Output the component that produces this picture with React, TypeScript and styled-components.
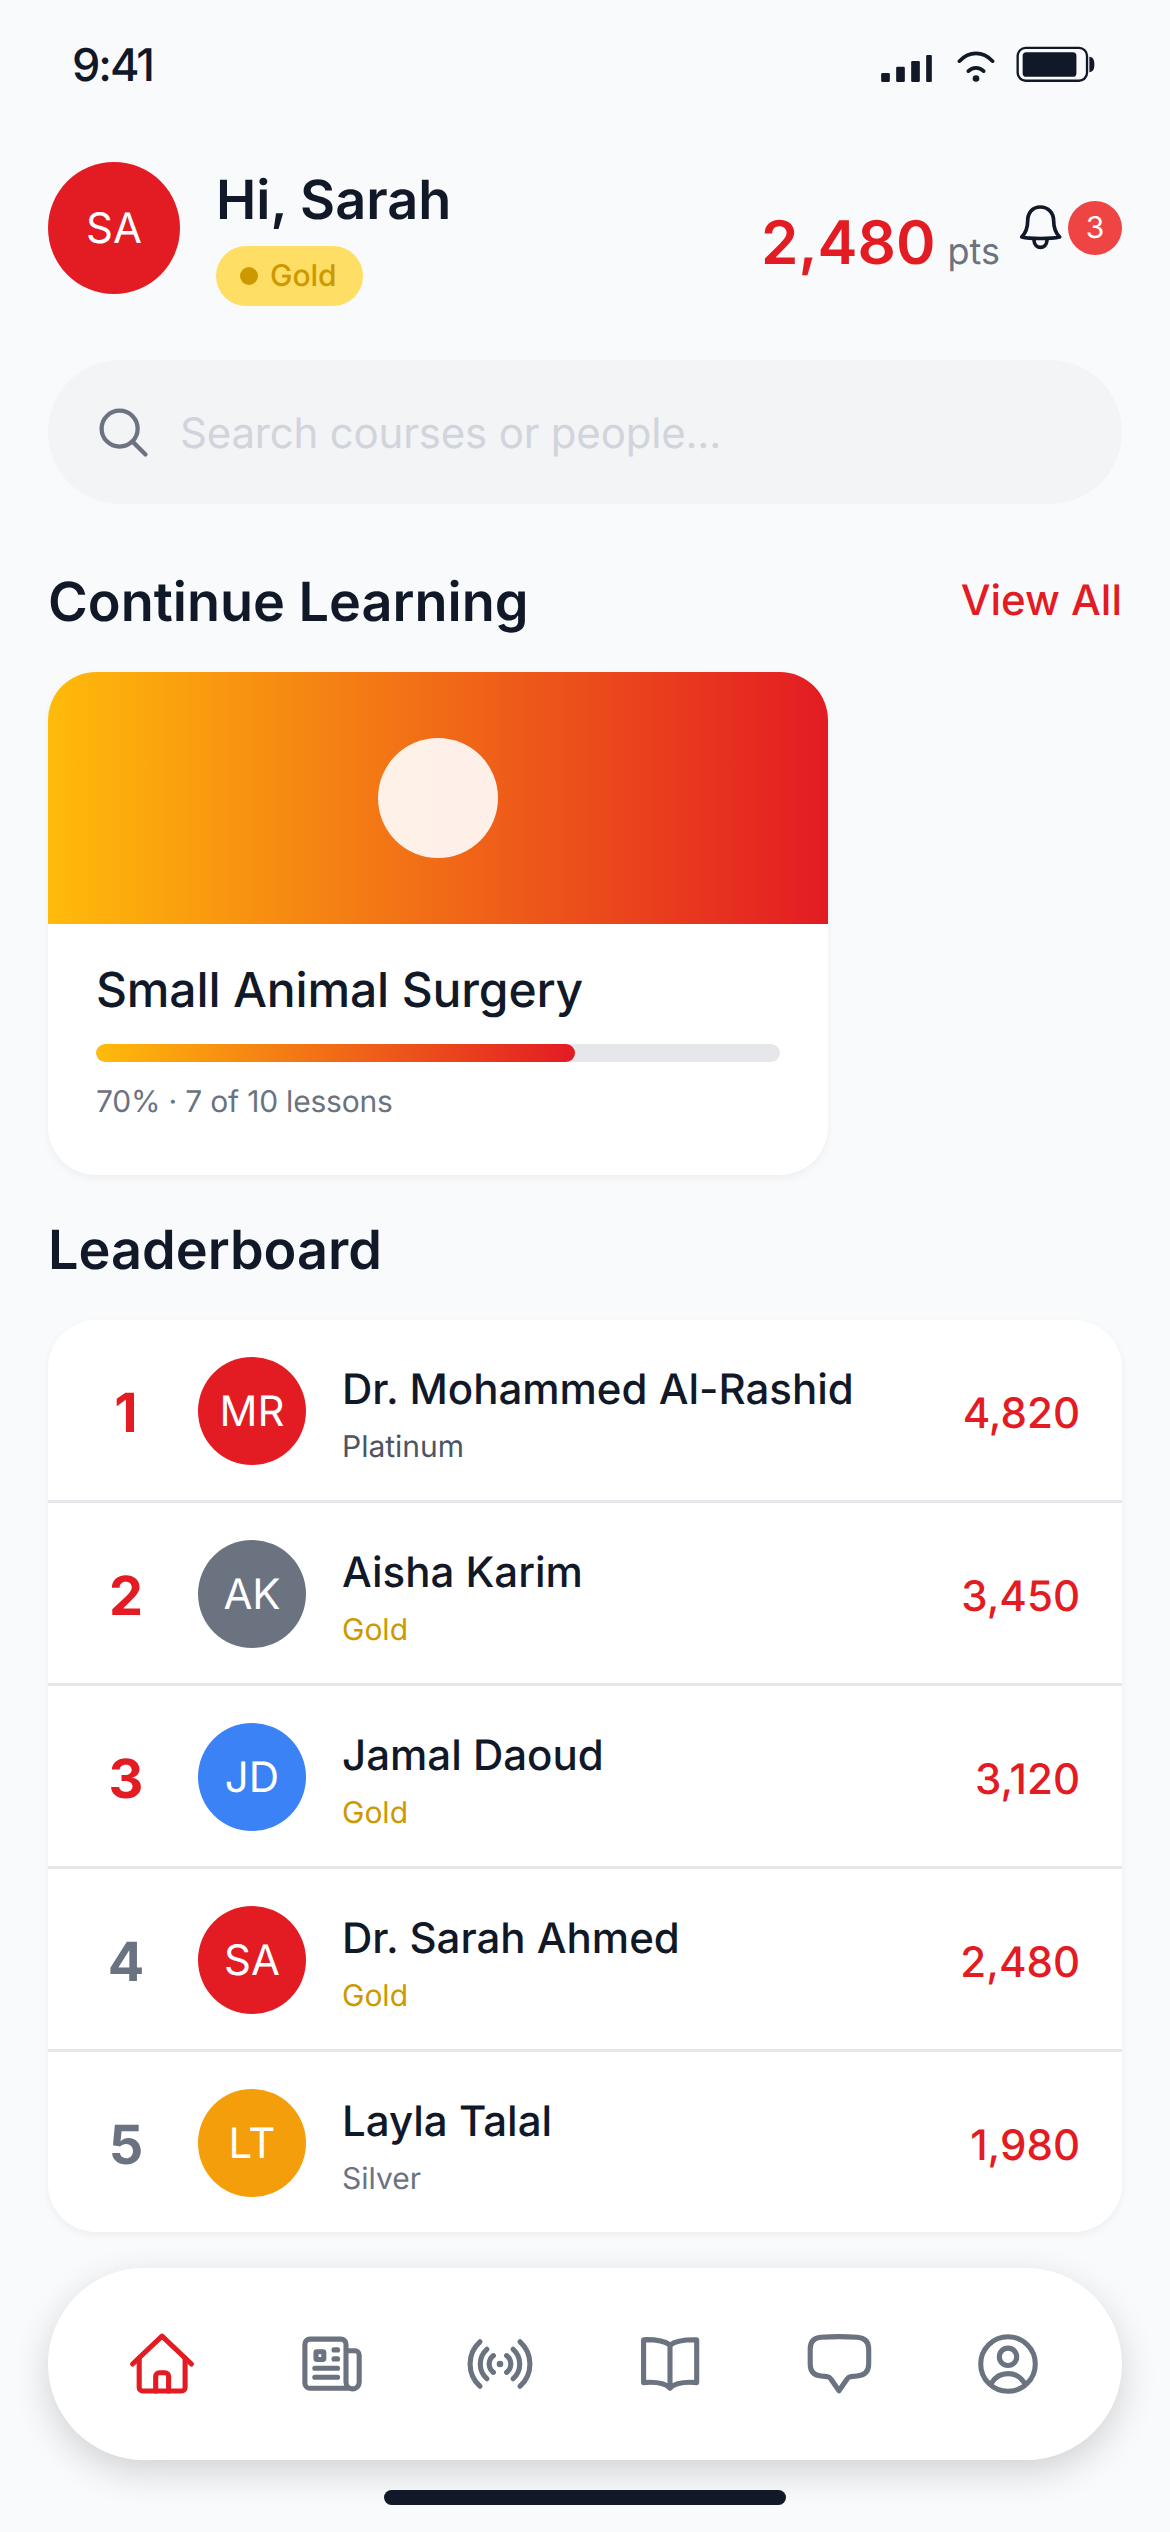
import styled, { createGlobalStyle } from "styled-components";

const RED = "#e31b23";
const INK = "#111827";
const GREY = "#6b7280";
const GOLD = "#cc9900";

const GlobalStyle = createGlobalStyle`
  html, body {
    margin: 0;
    padding: 0;
    background: #f9fafb;
  }
  * {
    box-sizing: border-box;
  }
`;

const Screen = styled.div`
  width: 1170px;
  height: 2532px;
  overflow: hidden;
  background: #f9fafb;
  font-family: Inter, "Noto Sans", sans-serif;
  text-rendering: geometricPrecision;
  color: ${INK};
  display: flex;
  flex-direction: column;
`;

const StatusBar = styled.div`
  height: 132px;
  padding: 40px 75px 0 72px;
  display: flex;
  justify-content: space-between;
  align-items: flex-start;
`;

const Time = styled.span`
  font-size: 45px;
  line-height: 50px;
  font-weight: 500;
  letter-spacing: -2px;
`;

const StatusIcons = styled.div`
  display: flex;
  align-items: flex-end;
  height: 43px;
  svg {
    display: block;
  }
`;

const Signal = styled.svg`
  width: 51px;
  height: 27px;
  margin-right: 24px;
  margin-bottom: 1px;
`;

const Wifi = styled.svg`
  width: 40px;
  height: 33px;
  margin-right: 20px;
`;

const Battery = styled.svg`
  width: 79px;
  height: 37px;
`;

const Content = styled.div`
  padding: 30px 48px 0;
  display: flex;
  flex-direction: column;
`;

const Header = styled.header`
  display: flex;
  align-items: flex-start;
  justify-content: space-between;
  height: 144px;
`;

const Profile = styled.div`
  display: flex;
  align-items: flex-start;
  gap: 36px;
`;

const Avatar = styled.div<{ $bg: string; $size: number; $font: number }>`
  width: ${(p) => p.$size}px;
  height: ${(p) => p.$size}px;
  border-radius: 50%;
  flex: none;
  background: ${(p) => p.$bg};
  color: #fff;
  font-size: ${(p) => p.$font}px;
  display: flex;
  align-items: center;
  justify-content: center;
`;

const Greeting = styled.div`
  font-size: 54px;
  line-height: 66px;
  font-weight: 600;
  margin-top: 6px;
`;

const TierPill = styled.div`
  margin-top: 12px;
  width: 147px;
  height: 60px;
  border-radius: 30px;
  background: #ffde66;
  color: ${GOLD};
  font-size: 30px;
  font-weight: 500;
  display: flex;
  align-items: center;
  gap: 12px;
  padding-left: 24px;
  &::before {
    content: "";
    width: 18px;
    height: 18px;
    border-radius: 50%;
    background: ${GOLD};
  }
`;

const HeaderRight = styled.div`
  display: flex;
  align-items: flex-start;
  margin-top: 39px;
`;

const Points = styled.div`
  font-size: 60px;
  line-height: 72px;
  font-weight: 600;
  color: ${RED};
  margin-top: 6px;
`;

const PointsUnit = styled.span`
  font-size: 36px;
  font-weight: 400;
  color: ${GREY};
  margin-left: 12px;
`;

const BellWrap = styled.div`
  display: flex;
  align-items: flex-start;
  gap: 5px;
  margin-left: 18px;
`;

const Bell = styled.svg`
  width: 45px;
  height: 48px;
  margin-top: 2px;
`;

const Badge = styled.span`
  width: 54px;
  height: 54px;
  border-radius: 50%;
  background: #ef4444;
  color: #fff;
  font-size: 30px;
  display: flex;
  align-items: center;
  justify-content: center;
`;

const SearchBar = styled.div`
  margin-top: 54px;
  height: 144px;
  border-radius: 72px;
  background: #f3f4f6;
  display: flex;
  align-items: center;
  padding-left: 48px;
  gap: 30px;
  font-size: 42px;
  letter-spacing: -0.2px;
  color: #d1d5db;
`;

const Placeholder = styled.span`
  padding-top: 3px;
`;

const SectionRow = styled.div<{ $top: number; $bottom: number }>`
  display: flex;
  align-items: center;
  justify-content: space-between;
  margin-top: ${(p) => p.$top}px;
  margin-bottom: ${(p) => p.$bottom}px;
`;

const SectionTitle = styled.h2`
  margin: 0;
  font-size: 54px;
  line-height: 66px;
  font-weight: 600;
`;

const ViewAll = styled.span`
  font-size: 42px;
  font-weight: 500;
  color: ${RED};
  padding-bottom: 6px;
`;

const CourseCard = styled.article`
  width: 780px;
  height: 503px;
  border-radius: 48px;
  background: #fff;
  overflow: hidden;
  box-shadow: 0 3px 9px rgba(0, 0, 0, 0.05);
`;

const CourseBanner = styled.div`
  height: 252px;
  background: linear-gradient(90deg, #ffbb0a 0%, ${RED} 100%);
  display: flex;
  align-items: center;
  justify-content: center;
  &::after {
    content: "";
    width: 120px;
    height: 120px;
    border-radius: 50%;
    background: rgba(255, 255, 255, 0.9);
  }
`;

const CourseBody = styled.div`
  padding: 37px 48px 0;
`;

const CourseTitle = styled.div`
  font-size: 48px;
  line-height: 58px;
  font-weight: 500;
  letter-spacing: -0.15px;
`;

const Track = styled.div`
  margin-top: 25px;
  height: 18px;
  border-radius: 9px;
  background: #e5e7eb;
  overflow: hidden;
`;

const Fill = styled.div`
  height: 100%;
  border-radius: 9px;
  background: linear-gradient(90deg, #ffbb0a 0%, ${RED} 100%);
`;

const CourseMeta = styled.div`
  margin-top: 22px;
  font-size: 30px;
  line-height: 36px;
  letter-spacing: -0.2px;
  color: ${GREY};
`;

const Board = styled.section`
  border-radius: 48px;
  background: #fff;
  overflow: hidden;
  box-shadow: 0 3px 9px rgba(0, 0, 0, 0.05);
`;

const Row = styled.div`
  height: 183px;
  display: flex;
  align-items: center;
  padding: 2px 42px 0 48px;
  border-bottom: 3px solid #e5e7eb;
  &:last-child {
    height: 180px;
    border-bottom: none;
  }
`;

const Rank = styled.div<{ $top: boolean }>`
  width: 60px;
  margin-right: 42px;
  padding-top: 4px;
  text-align: center;
  font-size: 54px;
  font-weight: 700;
  color: ${(p) => (p.$top ? RED : GREY)};
`;

const RowText = styled.div`
  flex: 1;
  margin-left: 36px;
  padding-top: 6px;
`;

const Name = styled.div`
  font-size: 42px;
  line-height: 52px;
  font-weight: 500;
`;

const Tier = styled.div<{ $color: string }>`
  margin-top: 13px;
  font-size: 30px;
  line-height: 36px;
  color: ${(p) => p.$color};
`;

const Score = styled.div`
  font-size: 42px;
  font-weight: 500;
  padding-top: 4px;
  color: ${RED};
`;

const NavBar = styled.nav`
  margin-top: 36px;
  height: 192px;
  border-radius: 96px;
  background: #fff;
  box-shadow: 0 12px 36px rgba(0, 0, 0, 0.16);
  display: flex;
  align-items: center;
  justify-content: space-between;
  padding: 0 78px;
`;

const NavIcon = styled.svg<{ $active?: boolean }>`
  width: 72px;
  height: 72px;
  fill: none;
  stroke: ${(p) => (p.$active ? RED : GREY)};
  stroke-width: 1.7;
  stroke-linecap: round;
  stroke-linejoin: round;
`;

const HomeIndicator = styled.div`
  width: 402px;
  height: 15px;
  border-radius: 8px;
  background: ${INK};
  margin: 30px auto 0;
`;

const players = [
  { name: "Dr. Mohammed Al-Rashid", initials: "MR", tier: "Platinum", tierColor: "#4b5563", score: "4,820", bg: RED },
  { name: "Aisha Karim", initials: "AK", tier: "Gold", tierColor: GOLD, score: "3,450", bg: GREY },
  { name: "Jamal Daoud", initials: "JD", tier: "Gold", tierColor: GOLD, score: "3,120", bg: "#3b82f6" },
  { name: "Dr. Sarah Ahmed", initials: "SA", tier: "Gold", tierColor: GOLD, score: "2,480", bg: RED },
  { name: "Layla Talal", initials: "LT", tier: "Silver", tierColor: GREY, score: "1,980", bg: "#f59e0b" },
];

export default function App() {
  return (
    <Screen>
      <GlobalStyle />
      <StatusBar>
        <Time>9:41</Time>
        <StatusIcons>
          <Signal viewBox="547 106 152 81" fill={INK}>
            <rect x="547" y="160" width="26" height="27" rx="4" />
            <rect x="592" y="141" width="26" height="46" rx="4" />
            <rect x="637" y="124" width="26" height="63" rx="4" />
            <rect x="682" y="106" width="17" height="81" rx="3" />
          </Signal>
          <Wifi viewBox="765 92 120 98" fill="none" stroke={INK} strokeWidth="11" strokeLinecap="round">
            <path d="M775 125 C805 94 845 94 875 125" />
            <path d="M802 155 C815 142 835 142 848 155" />
            <circle cx="825" cy="177" r="10" fill={INK} stroke="none" />
          </Wifi>
          <Battery viewBox="950 83 238 110">
            <rect x="955" y="88" width="209" height="99" rx="24" fill="none" stroke={INK} strokeWidth="7" />
            <rect x="970" y="101" width="162" height="74" rx="11" fill={INK} />
            <path d="M1171 115 C1181 116 1186 122 1186 138 C1186 154 1181 160 1171 161 Z" fill={INK} />
          </Battery>
        </StatusIcons>
      </StatusBar>

      <Content>
        <Header>
          <Profile>
            <Avatar $bg={RED} $size={132} $font={42}>
              SA
            </Avatar>
            <div>
              <Greeting>Hi, Sarah</Greeting>
              <TierPill>Gold</TierPill>
            </div>
          </Profile>
          <HeaderRight>
            <Points>
              2,480<PointsUnit>pts</PointsUnit>
            </Points>
            <BellWrap>
              <Bell viewBox="955 550 135 144" fill="none" stroke={INK} strokeWidth="11" strokeLinejoin="round" strokeLinecap="round">
                <path d="M1022 562 C998 562 984 580 984 604 C984 626 978 640 966 652 C990 658 1054 658 1080 652 C1068 640 1062 626 1062 604 C1062 580 1046 562 1022 562 Z" />
                <path d="M1003 662 C1005 690 1040 690 1042 662" />
              </Bell>
              <Badge>3</Badge>
            </BellWrap>
          </HeaderRight>
        </Header>

        <SearchBar>
          <svg width="54" height="54" viewBox="0 0 24 24" fill="none" stroke={GREY} strokeWidth="1.9" strokeLinecap="round">
            <circle cx="10.5" cy="10.5" r="8" />
            <path d="M16.5 16.5 L22 22" />
          </svg>
          <Placeholder>Search courses or people...</Placeholder>
        </SearchBar>

        <SectionRow $top={66} $bottom={36}>
          <SectionTitle>Continue Learning</SectionTitle>
          <ViewAll>View All</ViewAll>
        </SectionRow>

        <CourseCard>
          <CourseBanner />
          <CourseBody>
            <CourseTitle>Small Animal Surgery</CourseTitle>
            <Track>
              <Fill style={{ width: "70%" }} />
            </Track>
            <CourseMeta>70% · 7 of 10 lessons</CourseMeta>
          </CourseBody>
        </CourseCard>

        <SectionRow $top={43} $bottom={36}>
          <SectionTitle>Leaderboard</SectionTitle>
        </SectionRow>

        <Board>
          {players.map((player, index) => (
            <Row key={player.name}>
              <Rank $top={index < 3}>{index + 1}</Rank>
              <Avatar $bg={player.bg} $size={108} $font={42}>
                {player.initials}
              </Avatar>
              <RowText>
                <Name>{player.name}</Name>
                <Tier $color={player.tierColor}>{player.tier}</Tier>
              </RowText>
              <Score>{player.score}</Score>
            </Row>
          ))}
        </Board>

        <NavBar>
          <NavIcon viewBox="0 0 24 24" $active>
            <path d="M2.2 12 L12 2.7 L21.8 12" />
            <path d="M4.4 10 V19.8 A1.2 1.2 0 0 0 5.6 21 H18.5 A1.2 1.2 0 0 0 19.7 19.8 V10" />
            <path d="M9.9 21 V16.1 A1.2 1.2 0 0 1 11.1 14.9 H13 A1.2 1.2 0 0 1 14.2 16.1 V21" />
          </NavIcon>
          <NavIcon viewBox="0 0 24 24">
            <path d="M18 20.1 H5 A1.7 1.7 0 0 1 3.3 18.4 V5.4 A1.7 1.7 0 0 1 5 3.7 H15.3 A1.7 1.7 0 0 1 17 5.4 V18.1 A2 2 0 0 0 21.4 18.1 V9 A1.4 1.4 0 0 0 20 7.6 H17" />
            <rect x="7" y="7.9" width="2.6" height="2.6" rx="0.3" />
            <path d="M13 7.3 H14.2 M13 10.3 H14.2 M6.6 13.4 H14.2 M6.6 16.4 H14.2" />
          </NavIcon>
          <NavIcon viewBox="0 0 24 24">
            <path d="M5.3 4.6 A10 10 0 0 0 5.3 19.4 M18.7 4.6 A10 10 0 0 1 18.7 19.4" />
            <path d="M7.6 7.1 A6.6 6.6 0 0 0 7.6 16.9 M16.4 7.1 A6.6 6.6 0 0 1 16.4 16.9" />
            <path d="M9.8 9.2 A3.5 3.5 0 0 0 9.8 14.8 M14.2 9.2 A3.5 3.5 0 0 1 14.2 14.8" />
            <circle cx="12" cy="12" r="1.1" fill={GREY} stroke="none" />
          </NavIcon>
          <NavIcon viewBox="0 0 24 24">
            <path d="M12 5.7 C10.5 4.5 8 3.8 3.2 3.9 V18.2 C8 17.8 10.5 18.6 12 20 C13.5 18.6 16 17.8 20.9 18.2 V3.9 C16 3.8 13.5 4.5 12 5.7 Z" />
            <path d="M12 5.7 V20" />
          </NavIcon>
          <NavIcon viewBox="0 0 24 24">
            <path d="M6 3.1 C10 2.8 14 2.8 18 3.1 C20.5 3.3 21.9 4.6 21.9 7 V12 C21.9 14.5 20.5 15.8 18 16 L16 16.2 C15.3 16.3 15 16.5 14.7 17 L12 20.9 L9.3 17 C9 16.5 8.7 16.3 8 16.2 L6 16 C3.5 15.8 2.4 14.5 2.4 12 V7 C2.4 4.6 3.5 3.3 6 3.1 Z" />
          </NavIcon>
          <NavIcon viewBox="0 0 24 24">
            <circle cx="12" cy="12" r="9.1" />
            <circle cx="12" cy="9.6" r="2.9" />
            <path d="M6.6 18.2 C8 16 10 15.2 12 15.2 C14 15.2 16 16 17.4 18.2" />
          </NavIcon>
        </NavBar>

        <HomeIndicator />
      </Content>
    </Screen>
  );
}
